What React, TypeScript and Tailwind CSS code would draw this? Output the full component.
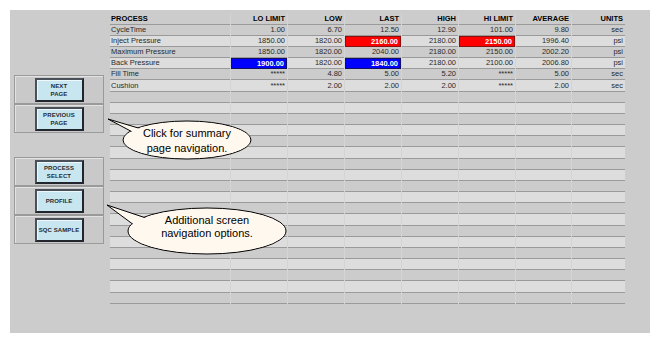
import React from "react";

type Cell = { v: string; hl?: "red" | "blue" };

const HEADERS = ["PROCESS", "LO LIMIT", "LOW", "LAST", "HIGH", "HI LIMIT", "AVERAGE", "UNITS"];

const DATA: Cell[][] = [
  [{ v: "CycleTime" }, { v: "1.00" }, { v: "6.70" }, { v: "12.50" }, { v: "12.90" }, { v: "101.00" }, { v: "9.80" }, { v: "sec" }],
  [{ v: "Inject Pressure" }, { v: "1850.00" }, { v: "1820.00" }, { v: "2160.00", hl: "red" }, { v: "2180.00" }, { v: "2150.00", hl: "red" }, { v: "1996.40" }, { v: "psi" }],
  [{ v: "Maximum Pressure" }, { v: "1850.00" }, { v: "1820.00" }, { v: "2040.00" }, { v: "2180.00" }, { v: "2150.00" }, { v: "2002.20" }, { v: "psi" }],
  [{ v: "Back Pressure" }, { v: "1900.00", hl: "blue" }, { v: "1820.00" }, { v: "1840.00", hl: "blue" }, { v: "2180.00" }, { v: "2100.00" }, { v: "2006.80" }, { v: "psi" }],
  [{ v: "Fill Time" }, { v: "*****" }, { v: "4.80" }, { v: "5.00" }, { v: "5.20" }, { v: "*****" }, { v: "5.00" }, { v: "sec" }],
  [{ v: "Cushion" }, { v: "*****" }, { v: "2.00" }, { v: "2.00" }, { v: "2.00" }, { v: "*****" }, { v: "2.00" }, { v: "sec" }],
];

const TOTAL_ROWS = 25;
const GRID = "grid grid-cols-[120px_56px_56px_56px_56px_56px_55px_53px] gap-x-px bg-[#d4d4d4]";

function NavButton({ lines }: { lines: string[] }) {
  return (
    <div className="h-[29px] border border-[#9a9a9a] bg-[#c9c9c9] shadow-[inset_1px_1px_0_#e2e2e2] flex items-center justify-center">
      <div className="w-[49px] h-[24px] border-2 border-t-[#4a505a] border-l-[#4a505a] border-r-[#22262c] border-b-[#22262c] bg-[#c8e6f0] shadow-[inset_1px_1px_0_#eef8fb] flex flex-col items-center justify-center">
        {lines.map((l) => (
          <span key={l} className="text-[6px] leading-[8px] font-bold text-[#1e2a33] tracking-[0.1px]">
            {l}
          </span>
        ))}
      </div>
    </div>
  );
}

function Row({ idx }: { idx: number }) {
  const light = idx % 2 === 0;
  const h = idx % 6 === 0 ? "h-[12px]" : "h-[11px]";
  const cells = DATA[idx - 1];
  const bg = light ? "bg-[#dddddd]" : "bg-[#cccccc]";
  return (
    <div className={GRID}>
      {Array.from({ length: 8 }).map((_, c) => {
        const cell = cells ? cells[c] : undefined;
        if (cell?.hl === "red") {
          return (
            <div key={c} className={`${h} bg-[#ff0000] border border-[#8a1010] flex items-center justify-end pr-[2px] text-[7.5px] font-bold text-white`}>
              {cell.v}
            </div>
          );
        }
        if (cell?.hl === "blue") {
          return (
            <div key={c} className={`${h} bg-[#0000ff] border border-[#101060] flex items-center justify-end pr-[2px] text-[7.5px] font-bold text-white`}>
              {cell.v}
            </div>
          );
        }
        return (
          <div
            key={c}
            className={`${h} ${bg} border-b border-[#9a9a9a] flex items-center text-[7.5px] text-[#2a2a2a] ${c === 0 ? "justify-start pl-[1px]" : "justify-end pr-[2px]"}`}
          >
            {cell?.v ?? ""}
          </div>
        );
      })}
    </div>
  );
}

export default function App() {
  return (
    <div className="relative w-[660px] h-[340px] bg-white pt-[10px] pl-[10px] font-['Liberation_Sans',Arial,sans-serif]">
      <div className="w-[640px] h-[323px] bg-[#cccccc] flex">
        {/* Left navigation buttons */}
        <div className="w-[100px] pl-[4px] pt-[65px] flex flex-col">
          <div className="w-[90px] flex flex-col">
            <NavButton lines={["NEXT", "PAGE"]} />
            <NavButton lines={["PREVIOUS", "PAGE"]} />
          </div>
          <div className="w-[90px] flex flex-col mt-[24px]">
            <NavButton lines={["PROCESS", "SELECT"]} />
            <NavButton lines={["PROFILE"]} />
            <NavButton lines={["SQC SAMPLE"]} />
          </div>
        </div>

        {/* Process table */}
        <div className="pt-[3px]">
          <div className={GRID}>
            {HEADERS.map((hd, i) => (
              <div
                key={hd}
                className={`h-[12px] bg-[#cccccc] border-b border-[#9a9a9a] flex items-center text-[7.5px] font-bold text-black ${i === 0 ? "justify-start pl-[1px]" : "justify-end pr-[2px]"}`}
              >
                {hd}
              </div>
            ))}
          </div>
          {Array.from({ length: TOTAL_ROWS }).map((_, i) => (
            <Row key={i} idx={i + 1} />
          ))}
        </div>
      </div>

      {/* Callouts */}
      <svg className="absolute left-0 top-0 pointer-events-none" width="660" height="340" viewBox="0 0 660 340">
        <ellipse cx="187" cy="140" rx="64" ry="19" fill="#fff8ef" stroke="#000" strokeWidth="1" />
        <polygon points="108,119 145,130 140,136" fill="#fff8ef" stroke="#000" strokeWidth="1" />
        <ellipse cx="187" cy="140" rx="63" ry="18" fill="#fff8ef" />

        <ellipse cx="207" cy="231" rx="79" ry="23" fill="#fff8ef" stroke="#000" strokeWidth="1" />
        <polygon points="107,205 152,220 138,228" fill="#fff8ef" stroke="#000" strokeWidth="1" />
        <ellipse cx="207" cy="231" rx="78" ry="22" fill="#fff8ef" />
      </svg>
      <div className="absolute left-[127px] top-[126px] w-[120px] text-center text-[11px] leading-[15px] text-black">
        Click for summary
        <br />
        page navigation.
      </div>
      <div className="absolute left-[137px] top-[214px] w-[140px] text-center text-[11px] leading-[13px] text-black">
        Additional screen
        <br />
        navigation options.
      </div>
    </div>
  );
}
